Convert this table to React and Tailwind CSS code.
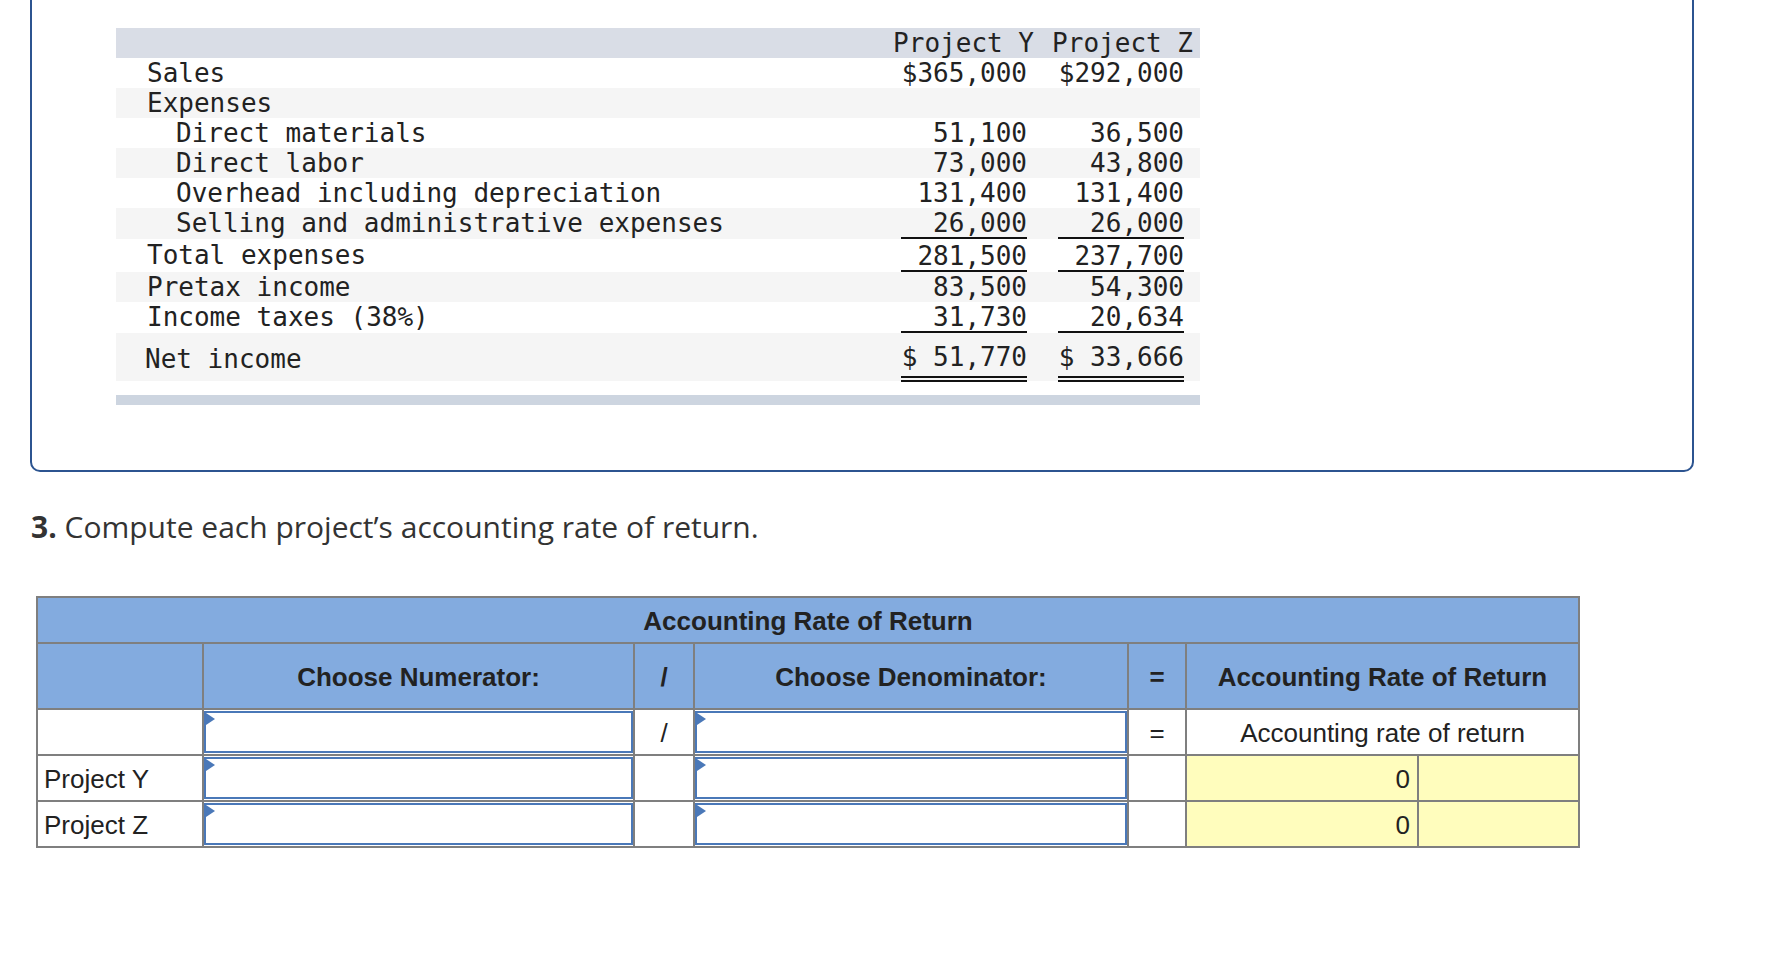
import React from 'react'

const mono = { fontFamily: '"DejaVu Sans Mono", monospace' }

const rows = [
  { label: 'Sales', y: '$365,000', z: '$292,000', h: 'h-[30px]', bg: 'bg-white', indent: false, line: '' },
  { label: 'Expenses', y: '', z: '', h: 'h-[30px]', bg: 'bg-[#f5f5f5]', indent: false, line: '' },
  { label: 'Direct materials', y: '51,100', z: '36,500', h: 'h-[30px]', bg: 'bg-white', indent: true, line: '' },
  { label: 'Direct labor', y: '73,000', z: '43,800', h: 'h-[30px]', bg: 'bg-[#f5f5f5]', indent: true, line: '' },
  { label: 'Overhead including depreciation', y: '131,400', z: '131,400', h: 'h-[30px]', bg: 'bg-white', indent: true, line: '' },
  { label: 'Selling and administrative expenses', y: '26,000', z: '26,000', h: 'h-[31px]', bg: 'bg-[#f5f5f5]', indent: true, line: 'single' },
  { label: 'Total expenses', y: '281,500', z: '237,700', h: 'h-[33px]', bg: 'bg-white', indent: false, line: 'single' },
  { label: 'Pretax income', y: '83,500', z: '54,300', h: 'h-[30px]', bg: 'bg-[#f5f5f5]', indent: false, line: '' },
  { label: 'Income taxes (38%)', y: '31,730', z: '20,634', h: 'h-[31px]', bg: 'bg-white', indent: false, line: 'single' },
]

function Num({ value, line }) {
  if (line === 'single') {
    return <span className="w-[126px] text-right border-b-2 border-[#111] leading-[28px]">{value}</span>
  }
  return <span className="w-[126px] text-right leading-[30px]">{value}</span>
}

function IncomeTable() {
  return (
    <div className="w-[1084px] text-[26px] text-[#222]" style={mono}>
      <div className="h-[30px] flex bg-[#d9dde6] leading-[30px]">
        <div className="flex-1" />
        <div className="w-[161px] text-right pr-[7px]">Project Y</div>
        <div className="w-[159px] text-right pr-[7px]">Project Z</div>
      </div>
      {rows.map((r) => (
        <div key={r.label} className={`flex ${r.h} ${r.bg} whitespace-pre`}>
          <div className={`flex-1 flex items-center ${r.indent ? 'pl-[60px]' : 'pl-[31px]'}`}>{r.label}</div>
          <div className="w-[161px] flex justify-end items-end pr-[14px]">
            {r.y && <Num value={r.y} line={r.line} />}
          </div>
          <div className="w-[159px] flex justify-end items-end pr-[16px]">
            {r.z && <Num value={r.z} line={r.line} />}
          </div>
        </div>
      ))}
      <div className="flex h-[48px] bg-[#f5f5f5] whitespace-pre">
        <div className="flex-1 pl-[29px] pt-[11px] leading-[30px]">Net income</div>
        <div className="w-[161px] flex justify-end items-start pt-[9px] pr-[14px]">
          <span className="w-[126px] text-right leading-[30px] pb-[4px] border-b-[6px] border-double border-[#111]">$ 51,770</span>
        </div>
        <div className="w-[159px] flex justify-end items-start pt-[9px] pr-[16px]">
          <span className="w-[126px] text-right leading-[30px] pb-[4px] border-b-[6px] border-double border-[#111]">$ 33,666</span>
        </div>
      </div>
      <div className="h-[10px] mt-[14px] bg-[#cdd5e0]" />
    </div>
  )
}

function Pick() {
  return (
    <div className="relative h-[42px] border-2 border-[#4a78b8] bg-white">
      <div className="absolute left-0 top-0 w-0 h-0 border-y-[6px] border-y-transparent border-l-[9px] border-l-[#4a78b8]" />
    </div>
  )
}

export default function App() {
  const cell = 'border-2 border-[#7f7f7f]'
  const head = `${cell} bg-[#83abdf] font-bold text-center pt-[3px]`
  return (
    <div className="w-[1770px] h-[964px] bg-white overflow-hidden">
      <div className="ml-[30px] -mt-[20px] w-[1664px] h-[492px] border-2 border-[#2c5490] rounded-[10px] pl-[84px] pt-[46px]">
        <IncomeTable />
      </div>

      <p className="mt-[37px] ml-[31px] text-[30px] leading-[36px] text-[#333]" style={{ fontFamily: '"Open Sans", Lato, sans-serif' }}>
        <span className="font-bold">3.</span> Compute each project’s accounting rate of return.
      </p>

      <table
        className="mt-[51px] ml-[36px] w-[1542px] table-fixed border-collapse text-[26px] text-[#222]"
        style={{ fontFamily: '"Liberation Sans", Arial, sans-serif' }}
      >
        <colgroup>
          <col className="w-[166px]" />
          <col className="w-[431px]" />
          <col className="w-[60px]" />
          <col className="w-[434px]" />
          <col className="w-[58px]" />
          <col className="w-[232px]" />
          <col className="w-[161px]" />
        </colgroup>
        <tbody>
          <tr className="h-[46px]">
            <td colSpan={7} className={head}>Accounting Rate of Return</td>
          </tr>
          <tr className="h-[66px]">
            <td className={head}></td>
            <td className={head}>Choose Numerator:</td>
            <td className={head}>/</td>
            <td className={head}>Choose Denominator:</td>
            <td className={head}>=</td>
            <td colSpan={2} className={head}>Accounting Rate of Return</td>
          </tr>
          <tr className="h-[46px]">
            <td className={cell}></td>
            <td className={`${cell} p-0`}><Pick /></td>
            <td className={`${cell} text-center pt-[2px]`}>/</td>
            <td className={`${cell} p-0`}><Pick /></td>
            <td className={`${cell} text-center pt-[2px]`}>=</td>
            <td colSpan={2} className={`${cell} text-center pt-[2px]`}>Accounting rate of return</td>
          </tr>
          {['Project Y', 'Project Z'].map((p) => (
            <tr key={p} className="h-[46px]">
              <td className={`${cell} pl-[6px] pt-[2px]`}>{p}</td>
              <td className={`${cell} p-0`}><Pick /></td>
              <td className={cell}></td>
              <td className={`${cell} p-0`}><Pick /></td>
              <td className={cell}></td>
              <td className={`${cell} bg-[#fffdbd] text-right pr-[7px] pt-[2px]`}>0</td>
              <td className={`${cell} bg-[#fffdbd]`}></td>
            </tr>
          ))}
        </tbody>
      </table>
    </div>
  )
}
